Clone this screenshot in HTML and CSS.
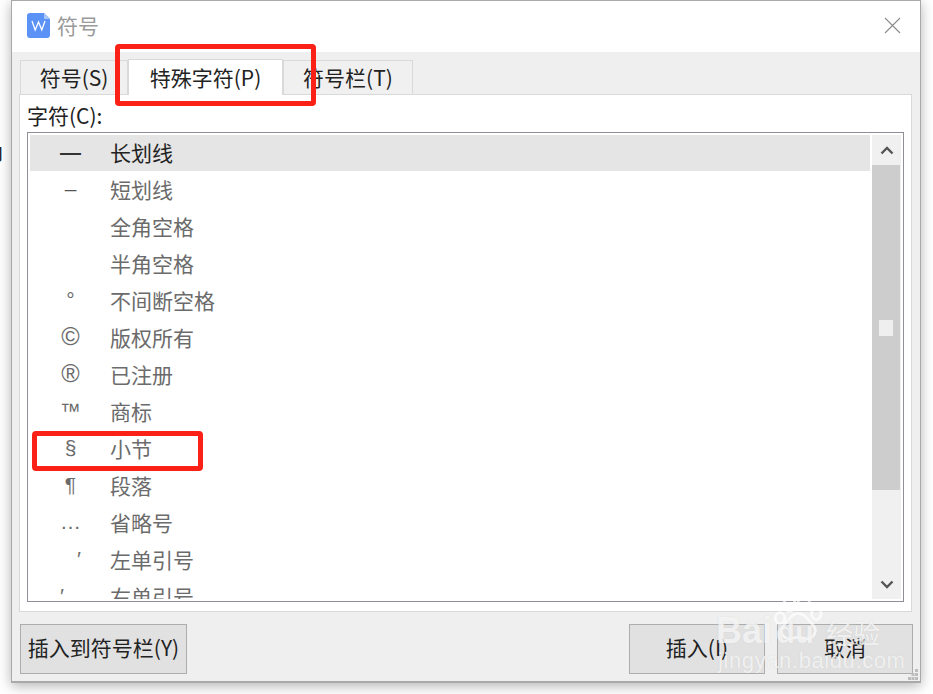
FILE: index.html
```html
<!DOCTYPE html>
<html lang="zh-CN">

<head>
    <meta charset="utf-8">
    <title>符号</title>
    <link rel="stylesheet" href="styles.css">
</head>

<body>
    <span class="behind">印</span>

    <div class="dialog">
        <header class="titlebar">
            <svg class="logo" width="23" height="25" viewBox="0 0 23 25">
                <path d="M3 0h14l6 6v16a3 3 0 0 1-3 3H3a3 3 0 0 1-3-3V3a3 3 0 0 1 3-3z" fill="#5b92f5" />
                <path d="M17 0l6 6h-6z" fill="#a9c6fa" />
                <path d="M5 8l3.200 9 3.300-8 3.300 8L18 8" fill="none" stroke="#fff" stroke-width="1.300" />
            </svg>
            <span class="title">符号</span>
            <svg class="close" width="17" height="17" viewBox="0 0 17 17">
                <path d="M1 1l15 15M16 1L1 16" stroke="#8c8c8c" stroke-width="1.100" fill="none" />
            </svg>
        </header>

        <nav class="tabs">
            <button class="tab tab-first">符号(S)</button>
            <button class="tab valgt">特殊字符(P)</button>
            <button class="tab tab-last">符号栏(T)</button>
        </nav>

        <section class="panel">
            <p class="label">字符(C):</p>
            <div class="listbox">
                <ul class="rows">
                    <li class="row row-selected"><span class="sym sym-latin sym-dash">—</span><span>长划线</span></li>
                    <li class="row"><span class="sym sym-latin sym-short">–</span><span>短划线</span></li>
                    <li class="row"><span class="sym"></span><span>全角空格</span></li>
                    <li class="row"><span class="sym"></span><span>半角空格</span></li>
                    <li class="row"><span class="sym sym-latin">°</span><span>不间断空格</span></li>
                    <li class="row"><span class="sym sym-latin sym-big">©</span><span>版权所有</span></li>
                    <li class="row"><span class="sym sym-latin sym-big">®</span><span>已注册</span></li>
                    <li class="row"><span class="sym sym-latin">™</span><span>商标</span></li>
                    <li class="row"><span class="sym sym-latin">§</span><span>小节</span></li>
                    <li class="row"><span class="sym sym-latin">¶</span><span>段落</span></li>
                    <li class="row"><span class="sym sym-latin">…</span><span>省略号</span></li>
                    <li class="row"><span class="sym sym-latin sym-left">′</span><span>左单引号</span></li>
                    <li class="row"><span class="sym sym-latin sym-right">′</span><span>右单引号</span></li>
                </ul>
                <div class="scrollbar">
                    <div class="arrow">
                        <svg width="14" height="9" viewBox="0 0 14 9">
                            <path d="M1.500 7.500L7 2l5.500 5.500" fill="none" stroke="#555" stroke-width="2.400" />
                        </svg>
                    </div>
                    <div class="thumb"><span class="thumb-mark"></span></div>
                    <div class="track"></div>
                    <div class="arrow">
                        <svg width="14" height="9" viewBox="0 0 14 9">
                            <path d="M1.500 1.500L7 7l5.500-5.500" fill="none" stroke="#555" stroke-width="2.400" />
                        </svg>
                    </div>
                </div>
            </div>
        </section>

        <footer class="buttons">
            <button class="btn btn-wide">插入到符号栏(Y)</button>
            <div class="btn-group">
                <button class="btn">插入(I)</button>
                <button class="btn">取消</button>
            </div>
        </footer>

        <svg class="grip" width="10" height="11" viewBox="0 0 10 11">
            <path d="M7 0h3v3H7zM3.500 4h3v3h-3zM7 4h3v3H7zM0 8h3v3H0zM3.500 8h3v3h-3zM7 8h3v3H7z" fill="#bdbdbd" />
        </svg>
    </div>

    <!-- red marks drawn on top of the screenshot -->
    <div class="mark mark-tab"></div>
    <div class="mark mark-row"></div>

    <!-- watermark -->
    <div class="watermark">
        <svg class="paw" width="52" height="52" viewBox="0 0 66 62">
            <g fill="none" stroke="#fff" stroke-width="3.500" opacity=".7">
                <ellipse cx="21" cy="12" rx="7" ry="9" />
                <ellipse cx="39" cy="9" rx="7" ry="8" />
                <ellipse cx="55" cy="24" rx="6" ry="8" />
                <ellipse cx="9" cy="30" rx="6" ry="7" />
                <path d="M32 24c9 0 13 9 19 15 6 7 1 17-9 17-4 0-7-2-10-2s-6 2-11 2c-9 0-13-9-8-16 6-6 10-16 19-16z" />
            </g>
        </svg>
        <span class="wm-baidu">Bai<span class="wm-du">du</span></span>
        <span class="wm-jy">经验</span>
        <span class="wm-url">jingyan.baidu.com</span>
    </div>
</body>

</html>
```

FILE: styles.css
```css
* {
    box-sizing: border-box;
}

html,
body {
    height: 100%;
}

body {
    margin: 0;
    overflow: hidden;
    background-color: #fff;
    font-family: "Noto Sans CJK SC", "Noto Sans", sans-serif;
    font-size: 21px;
    color: #222;
}

button {
    font: inherit;
    color: inherit;
    padding: 0;
}

.behind {
    position: absolute;
    left: -17px;
    top: 140px;
    font-size: 20px;
    color: #222;
}

.dialog {
    position: relative;
    width: 910px;
    height: 683px;
    margin-left: 11px;
    background-color: #efefef;
    border: 1px solid #a9a9a9;
    border-bottom-width: 2px;
    box-shadow: 0 3px 12px rgba(0, 0, 0, .3);
}

.titlebar {
    display: flex;
    align-items: center;
    height: 51px;
    padding: 0 19px 3px 15px;
    background-color: #fff;
}

.logo {
    margin-right: 7px;
}

.title {
    color: #9a9a9a;
    flex: 1;
}

.tabs {
    display: flex;
    align-items: flex-end;
    height: 42px;
    padding-left: 8px;
}

.tab {
    height: 34px;
    padding-bottom: 2px;
    background-color: #f0f0f0;
    border: 1px solid #d9d9d9;
    border-bottom: none;
}

.tab-first {
    width: 108px;
}

.tab-last {
    width: 130px;
}

.valgt {
    position: relative;
    z-index: 1;
    width: 155px;
    height: 36px;
    margin-bottom: -1px;
    background-color: #fff;
    border-left: 1px solid #d9d9d9;
    border-right: 1px solid #d9d9d9;
}

.panel {
    height: 518px;
    margin: 0 8px 0 7px;
    padding: 0 7px;
    background-color: #fff;
    border: 1px solid #d9d9d9;
}

.label {
    height: 37px;
    margin: 0;
    line-height: 41px;
}

.listbox {
    display: flex;
    height: 470px;
    padding: 2px;
    background-color: #fff;
    border: 1px solid #8f8f98;
}

.rows {
    flex: 1;
    margin: 0;
    padding: 0;
    list-style: none;
    overflow: hidden;
}

.row {
    display: flex;
    align-items: center;
    height: 37px;
    padding-bottom: 2px;
    color: #6b6b6b;
}

.row-selected {
    height: 36px;
    margin-right: 2px;
    background-color: #e5e5e5;
    color: #222;
}

.sym {
    width: 21px;
    margin: 0 29px 0 30px;
    text-align: center;
    flex-shrink: 0;
}

.sym-dash {
    font-weight: 700;
    color: #333;
}

.sym-short {
    color: #555;
}

.sym-latin {
    font-family: "Liberation Sans", sans-serif;
}

.sym-big {
    font-size: 25px;
}

.sym-left {
    text-align: right;
}

.sym-right {
    text-align: left;
}

.scrollbar {
    display: flex;
    flex-direction: column;
    width: 29px;
    background-color: #f0f0f0;
}

.arrow {
    display: flex;
    align-items: center;
    justify-content: center;
    height: 30px;
}

.thumb {
    display: flex;
    align-items: center;
    justify-content: center;
    height: 325px;
    margin-right: 1px;
    background-color: #cdcdcd;
}

.thumb-mark {
    width: 14px;
    height: 16px;
    background-color: #efefef;
}

.track {
    flex: 1;
}

.buttons {
    display: flex;
    justify-content: space-between;
    padding: 12px 7px 0 8px;
}

.btn {
    width: 136px;
    height: 50px;
    padding-bottom: 4px;
    background-color: #e1e1e1;
    border: 1px solid #adadad;
}

.btn-wide {
    width: 167px;
}

.btn-group {
    display: flex;
    gap: 12px;
}

.grip {
    position: absolute;
    right: 2px;
    bottom: 1px;
}

.mark {
    position: absolute;
    border: 5px solid #fb2116;
    border-radius: 4px;
}

.mark-tab {
    left: 115px;
    top: 44px;
    width: 201px;
    height: 62px;
}

.mark-row {
    left: 32px;
    top: 431px;
    width: 171px;
    height: 40px;
}

.watermark {
    position: absolute;
    left: 713px;
    top: 590px;
    width: 190px;
    height: 90px;
    color: rgba(255, 255, 255, .72);
    text-shadow: 0 0 1px rgba(170, 170, 170, .4);
}

.paw {
    position: absolute;
    left: 60px;
    top: 3px;
}

.wm-baidu {
    position: absolute;
    left: 3px;
    top: 20px;
    font-family: "Liberation Sans", sans-serif;
    font-size: 36px;
    font-weight: bold;
    line-height: 42px;
}

.wm-du {
    font-size: 31px;
    margin-left: 4px;
}

.wm-jy {
    position: absolute;
    left: 113px;
    top: 23px;
    font-size: 27px;
    line-height: 40px;
}

.wm-url {
    position: absolute;
    left: 5px;
    top: 57px;
    font-family: "Liberation Sans", sans-serif;
    font-size: 22px;
    line-height: 28px;
    letter-spacing: .6px;
}
```
